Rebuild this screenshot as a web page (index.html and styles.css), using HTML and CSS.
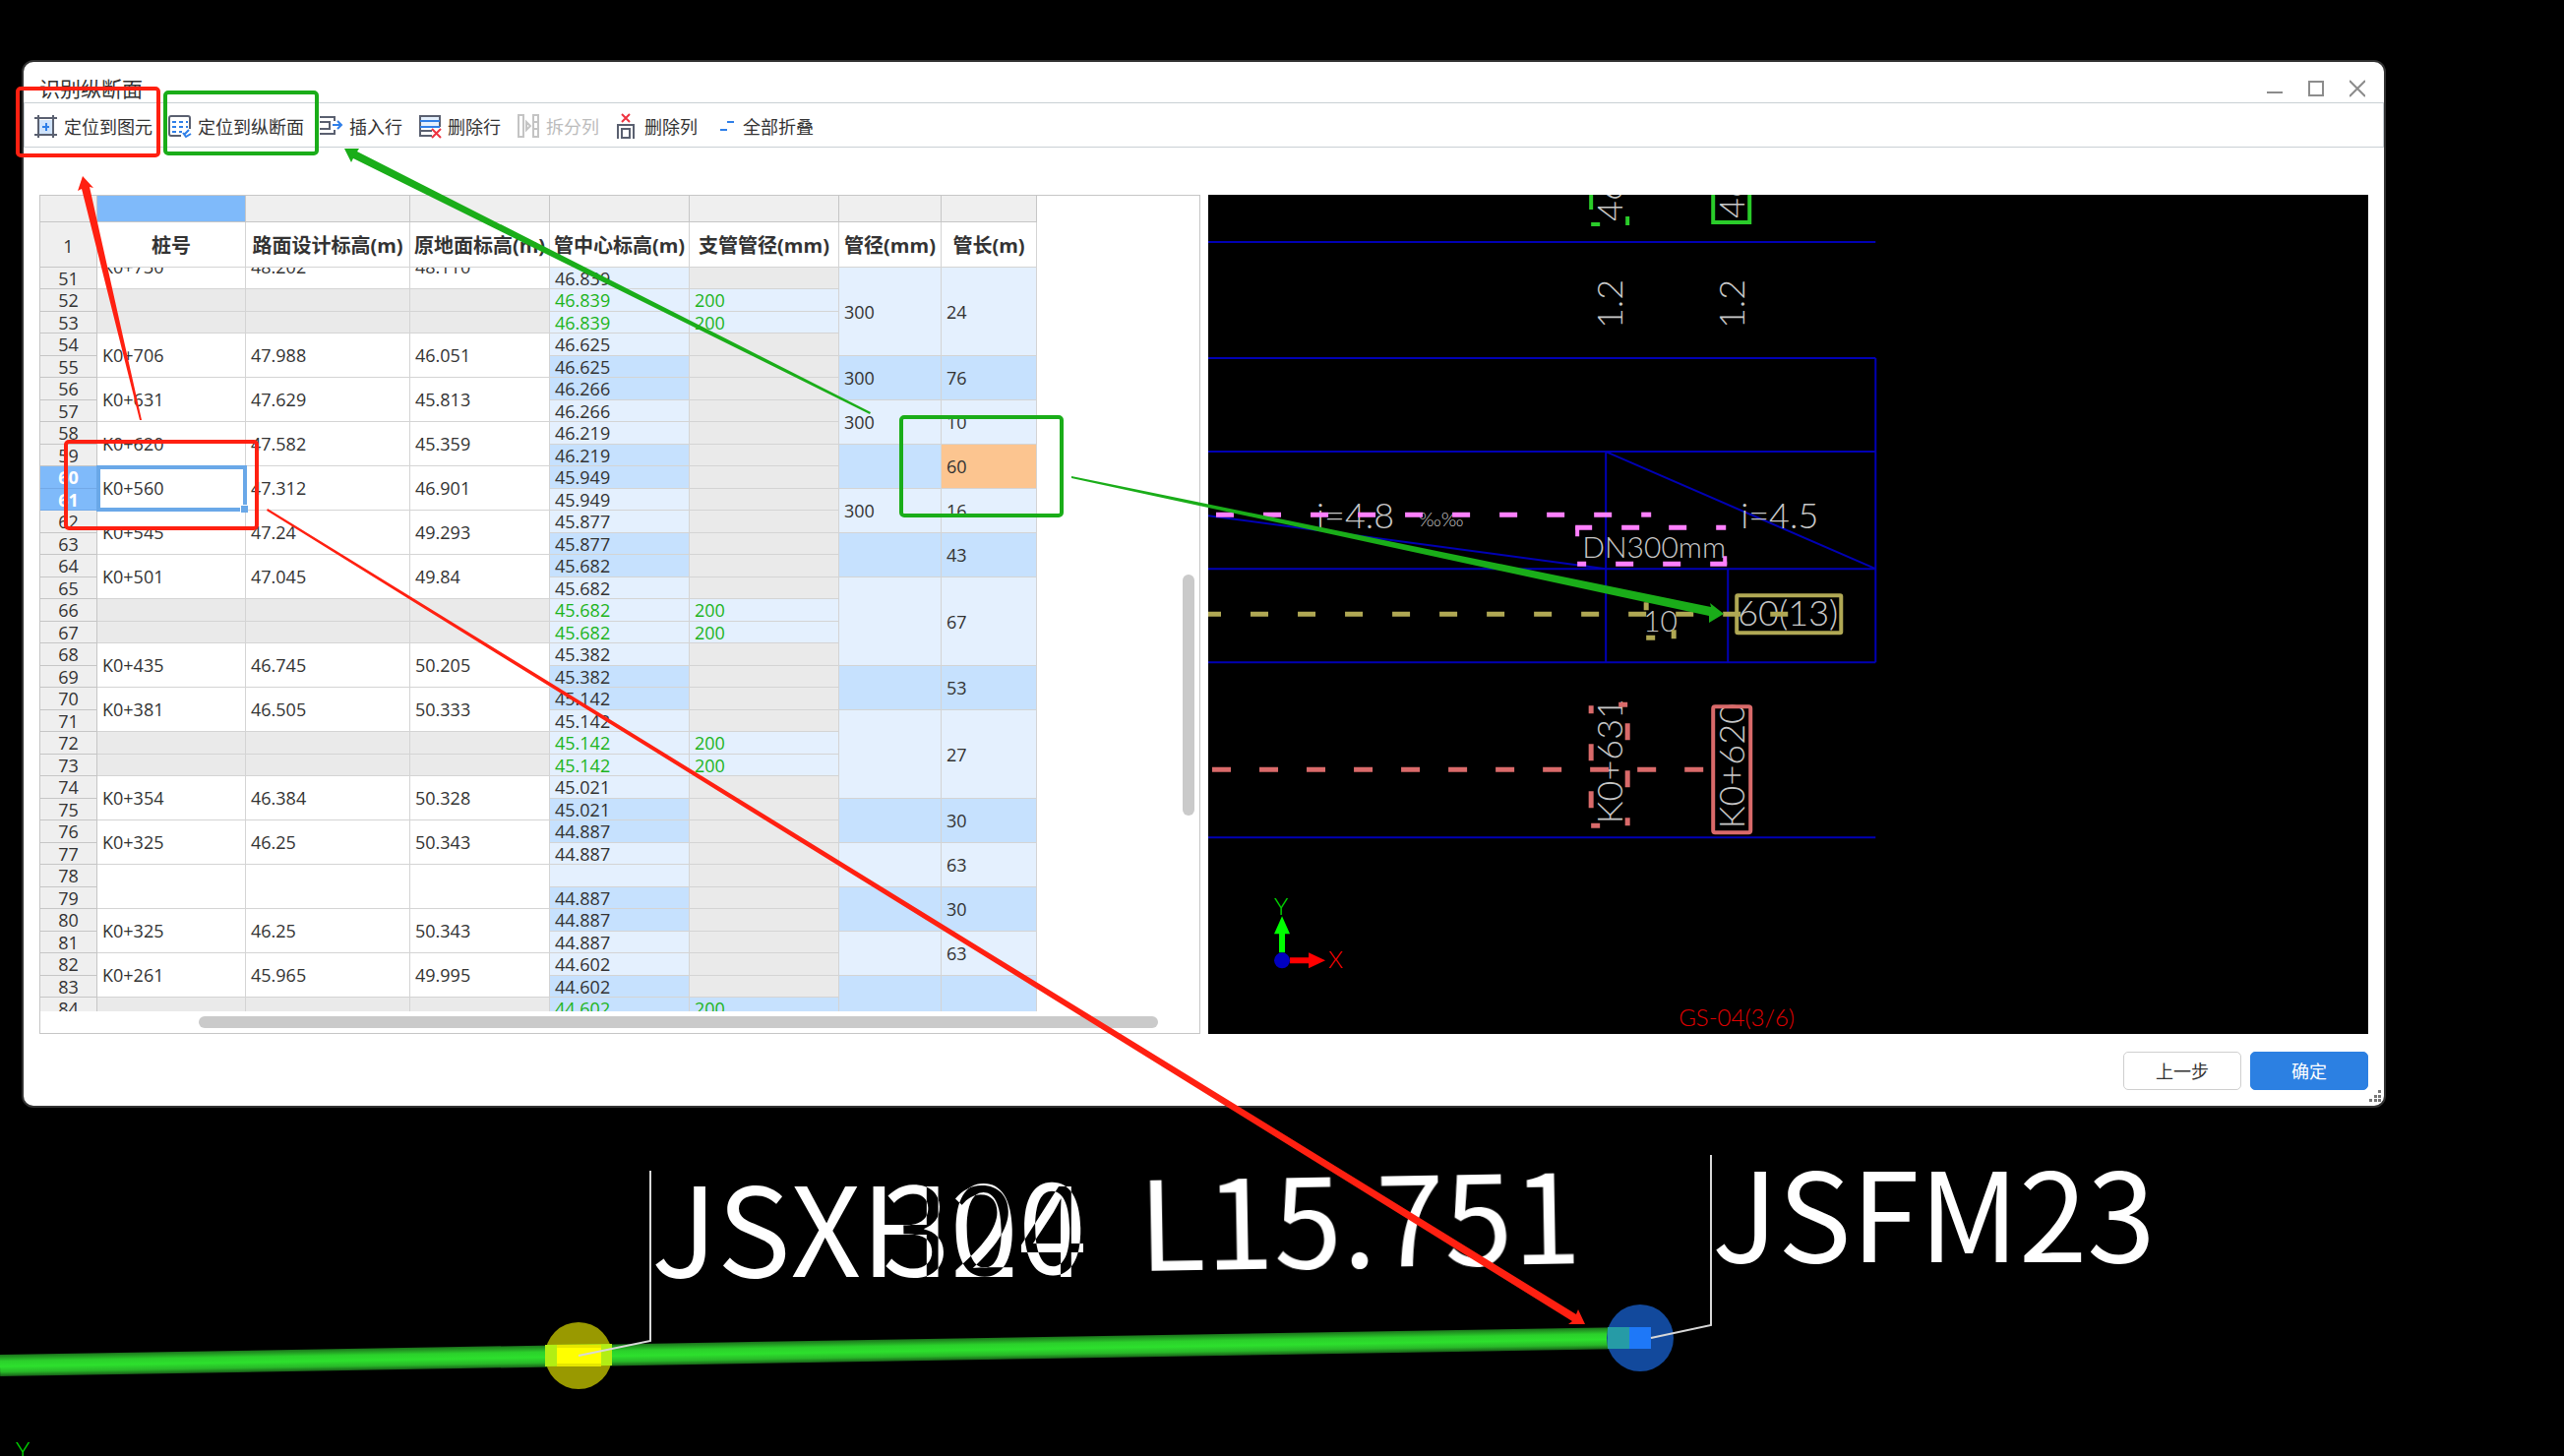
FILE: index.html
```html
<!DOCTYPE html>
<html lang="zh-CN">
<head>
<meta charset="utf-8">
<title>识别纵断面</title>
<link rel="stylesheet" href="styles.css">
</head>
<body>
<svg class="scene" width="2606" height="1480" aria-hidden="true">
  <defs>
    <linearGradient id="pipe" x1="0" y1="0" x2="0" y2="1">
      <stop offset="0" stop-color="#1c741c"/><stop offset="0.3" stop-color="#2bd02b"/>
      <stop offset="0.55" stop-color="#2de02d"/><stop offset="0.8" stop-color="#28b828"/>
      <stop offset="1" stop-color="#186018"/>
    </linearGradient>
  </defs>
  <rect x="0" y="1377" width="1657" height="22" fill="url(#pipe)" transform="rotate(-0.97 0 1388)"/>
  <circle cx="588" cy="1378" r="34" fill="#999900"/>
  <path d="M554 1367L622 1366V1388L554 1389Z" fill="#b2ee14"/>
  <rect x="566" y="1367" width="45" height="22" fill="#e6e600"/>
  <rect x="566" y="1370" width="45" height="16" fill="#ffff00"/>
  <circle cx="1667" cy="1360" r="34" fill="#12499c"/>
  <rect x="1634" y="1349" width="22" height="22" fill="#269ba6"/>
  <rect x="1656" y="1349" width="22" height="22" fill="#1e78f8"/>
  <g fill="none" stroke="#d8d8d8" stroke-width="2">
    <path d="M661 1190V1363L588 1378"/>
    <path d="M1739 1174V1347L1678 1360"/>
  </g>
  <g class="label">
    <text x="662" y="1298">JSXH24</text>
    <text class="label-cross" x="897" y="1298" transform="rotate(-1 897 1298)">300</text>
    <text x="1158" y="1292" transform="rotate(-1 1158 1292)">L15.751</text>
    <text x="1740" y="1283">JSFM23</text>
  </g>
  <text class="cad axis-y" x="16" y="1483">Y</text>
</svg>

<main class="dialog">
  <header class="titlebar">
    <h1>识别纵断面</h1>
    <div class="controls">
      <button aria-label="最小化"><svg width="16" height="18"><path d="M0 13H16"/></svg></button>
      <button aria-label="最大化"><svg width="16" height="18"><rect x="1" y="2" width="14" height="14"/></svg></button>
      <button aria-label="关闭"><svg width="16" height="18"><path d="M0 1L16 17M16 1L0 17"/></svg></button>
    </div>
  </header>
  <nav class="toolbar">
    <button><svg class="ico" viewBox="0 0 24 24"><rect x="5" y="5" width="13" height="14" fill="#cfe3fb" stroke="none"/><path d="M4 0V23M19 0V23M0 3H23M0 20H23"/><path class="b" d="M8 12H15M12 8V16"/></svg>定位到图元</button>
    <button><svg class="ico" viewBox="0 0 24 24"><path d="M22 14V3Q22 1 20 1H3Q1 1 1 3V19Q1 21 3 21H13"/><path class="b" stroke-dasharray="4 3" d="M4 7H20M4 12H20M4 17H14"/><path class="b" d="M16 20L21 15M15 18L18 22L23 19"/></svg>定位到纵断面</button>
    <button><svg class="ico" viewBox="0 0 24 24"><path d="M0 2H15V6M0 19H15V15M0 7H10V14H0"/><path class="b" d="M13 10H22M18 6L22 10L18 14"/></svg>插入行</button>
    <button><svg class="ico" viewBox="0 0 24 24"><rect x="2" y="1" width="20" height="11" fill="#e4f0fe" stroke="none"/><path d="M2 12V1H22V12M2 12V21H14M2 16H14"/><path class="b" d="M2 6H22M2 12H22"/><path class="r" d="M14 14L23 23M23 14L14 23"/></svg>删除行</button>
    <button disabled><svg class="ico" viewBox="0 0 24 24"><path d="M2 0H7V22H2ZM17 0H22V22H17ZM17 7H22M17 14H22M10 7L14 11L10 15Z"/></svg>拆分列</button>
    <button><svg class="ico" viewBox="0 0 24 24"><path d="M3 24V10H19V24M7 14H15V23H7Z"/><path class="r" d="M7 -1L15 7M15 -1L7 7"/></svg>删除列</button>
    <button><svg class="ico" viewBox="0 0 24 24"><path class="b" d="M14 7H21M7 15H14"/></svg>全部折叠</button>
  </nav>

  <section class="content">
    <div class="panel">
      <table class="grid">
        <colgroup><col class="w0"><col class="w1"><col class="w2"><col class="w3"><col class="w3"><col class="w4"><col class="w5"><col class="w6"></colgroup>
        <tr class="letters"><th></th><th class="on"></th><th></th><th></th><th></th><th></th><th></th><th></th></tr>
        <tr class="names"><th class="num">1</th><th>桩号</th><th>路面设计标高(m)</th><th>原地面标高(m)</th><th>管中心标高(m)</th><th>支管管径(mm)</th><th>管径(mm)</th><th>管长(m)</th></tr>
      </table>
      <div class="rows">
        <table class="grid data">
          <colgroup><col class="w0"><col class="w1"><col class="w2"><col class="w3"><col class="w3"><col class="w4"><col class="w5"><col class="w6"></colgroup>
          <tr><th></th><td rowspan="2">K0+730</td><td rowspan="2">48.202</td><td rowspan="2">48.110</td><td class="l"></td><td class="g"></td><td class="l"></td><td class="l"></td></tr>
          <tr><th>51</th><td class="l">46.839</td><td class="g"></td><td class="l" rowspan="4">300</td><td class="l" rowspan="4">24</td></tr>
          <tr><th>52</th><td class="g"></td><td class="g"></td><td class="g"></td><td class="l n">46.839</td><td class="l n">200</td></tr>
          <tr><th>53</th><td class="g"></td><td class="g"></td><td class="g"></td><td class="l n">46.839</td><td class="l n">200</td></tr>
          <tr><th>54</th><td rowspan="2">K0+706</td><td rowspan="2">47.988</td><td rowspan="2">46.051</td><td class="l">46.625</td><td class="g"></td></tr>
          <tr><th>55</th><td class="d">46.625</td><td class="g"></td><td class="d" rowspan="2">300</td><td class="d" rowspan="2">76</td></tr>
          <tr><th>56</th><td rowspan="2">K0+631</td><td rowspan="2">47.629</td><td rowspan="2">45.813</td><td class="d">46.266</td><td class="g"></td></tr>
          <tr><th>57</th><td class="l">46.266</td><td class="g"></td><td class="l" rowspan="2">300</td><td class="l" rowspan="2">10</td></tr>
          <tr><th>58</th><td rowspan="2">K0+620</td><td rowspan="2">47.582</td><td rowspan="2">45.359</td><td class="l">46.219</td><td class="g"></td></tr>
          <tr><th>59</th><td class="d">46.219</td><td class="g"></td><td class="d" rowspan="2"></td><td class="o" rowspan="2">60</td></tr>
          <tr><th class="on">60</th><td class="active" rowspan="2">K0+560</td><td rowspan="2">47.312</td><td rowspan="2">46.901</td><td class="d">45.949</td><td class="g"></td></tr>
          <tr><th class="on">61</th><td class="l">45.949</td><td class="g"></td><td class="l" rowspan="2">300</td><td class="l" rowspan="2">16</td></tr>
          <tr><th>62</th><td rowspan="2">K0+545</td><td rowspan="2">47.24</td><td rowspan="2">49.293</td><td class="l">45.877</td><td class="g"></td></tr>
          <tr><th>63</th><td class="d">45.877</td><td class="g"></td><td class="d" rowspan="2"></td><td class="d" rowspan="2">43</td></tr>
          <tr><th>64</th><td rowspan="2">K0+501</td><td rowspan="2">47.045</td><td rowspan="2">49.84</td><td class="d">45.682</td><td class="g"></td></tr>
          <tr><th>65</th><td class="l">45.682</td><td class="g"></td><td class="l" rowspan="4"></td><td class="l" rowspan="4">67</td></tr>
          <tr><th>66</th><td class="g"></td><td class="g"></td><td class="g"></td><td class="l n">45.682</td><td class="l n">200</td></tr>
          <tr><th>67</th><td class="g"></td><td class="g"></td><td class="g"></td><td class="l n">45.682</td><td class="l n">200</td></tr>
          <tr><th>68</th><td rowspan="2">K0+435</td><td rowspan="2">46.745</td><td rowspan="2">50.205</td><td class="l">45.382</td><td class="g"></td></tr>
          <tr><th>69</th><td class="d">45.382</td><td class="g"></td><td class="d" rowspan="2"></td><td class="d" rowspan="2">53</td></tr>
          <tr><th>70</th><td rowspan="2">K0+381</td><td rowspan="2">46.505</td><td rowspan="2">50.333</td><td class="d">45.142</td><td class="g"></td></tr>
          <tr><th>71</th><td class="l">45.142</td><td class="g"></td><td class="l" rowspan="4"></td><td class="l" rowspan="4">27</td></tr>
          <tr><th>72</th><td class="g"></td><td class="g"></td><td class="g"></td><td class="l n">45.142</td><td class="l n">200</td></tr>
          <tr><th>73</th><td class="g"></td><td class="g"></td><td class="g"></td><td class="l n">45.142</td><td class="l n">200</td></tr>
          <tr><th>74</th><td rowspan="2">K0+354</td><td rowspan="2">46.384</td><td rowspan="2">50.328</td><td class="l">45.021</td><td class="g"></td></tr>
          <tr><th>75</th><td class="d">45.021</td><td class="g"></td><td class="d" rowspan="2"></td><td class="d" rowspan="2">30</td></tr>
          <tr><th>76</th><td rowspan="2">K0+325</td><td rowspan="2">46.25</td><td rowspan="2">50.343</td><td class="d">44.887</td><td class="g"></td></tr>
          <tr><th>77</th><td class="l">44.887</td><td class="g"></td><td class="l" rowspan="2"></td><td class="l" rowspan="2">63</td></tr>
          <tr><th>78</th><td rowspan="2"></td><td rowspan="2"></td><td rowspan="2"></td><td class="l"></td><td class="g"></td></tr>
          <tr><th>79</th><td class="d">44.887</td><td class="g"></td><td class="d" rowspan="2"></td><td class="d" rowspan="2">30</td></tr>
          <tr><th>80</th><td rowspan="2">K0+325</td><td rowspan="2">46.25</td><td rowspan="2">50.343</td><td class="d">44.887</td><td class="g"></td></tr>
          <tr><th>81</th><td class="l">44.887</td><td class="g"></td><td class="l" rowspan="2"></td><td class="l" rowspan="2">63</td></tr>
          <tr><th>82</th><td rowspan="2">K0+261</td><td rowspan="2">45.965</td><td rowspan="2">49.995</td><td class="l">44.602</td><td class="g"></td></tr>
          <tr><th>83</th><td class="d">44.602</td><td class="g"></td><td class="d" rowspan="2"></td><td class="d" rowspan="2"></td></tr>
          <tr><th>84</th><td class="g"></td><td class="g"></td><td class="g"></td><td class="d n">44.602</td><td class="d n">200</td></tr>
        </table>
        <div class="vtrack"><div class="vthumb"></div></div>
      </div>
      <div class="htrack"><div class="hthumb"></div></div>
    </div>

    <svg class="view" viewBox="1228 198 1179 853" preserveAspectRatio="xMinYMin slice" role="img" aria-label="纵断面图">
      <g class="frame">
        <path d="M1228 246H1906M1228 364H1906M1228 459H1906M1228 578H1906M1228 673H1906M1228 851H1906"/>
        <path d="M1906 364V673M1632 459V673M1756 578V673M1632 459L1906 578M1228 524L1632 578"/>
      </g>
      <g class="cad">
        <text class="big" transform="translate(1649 225) rotate(-90)">46</text>
        <text class="big" transform="translate(1773 222) rotate(-90)">46</text>
        <text class="big" transform="translate(1649 334) rotate(-90)">1.2</text>
        <text class="big" transform="translate(1773 334) rotate(-90)">1.2</text>
        <text class="big" x="1338" y="537">i=4.8</text>
        <text class="small" x="1442" y="535">‰‰</text>
        <text class="mid" x="1608" y="567">DN300mm</text>
        <text class="big" x="1769" y="537">i=4.5</text>
        <text class="mid" x="1670" y="642">10</text>
        <text class="big" x="1766" y="636">60(13)</text>
        <text class="big" transform="translate(1649 837) rotate(-90)">K0+631</text>
        <text class="big" transform="translate(1773 842) rotate(-90)">K0+620</text>
        <text class="axis-y" x="1295" y="930">Y</text>
        <text class="axis-x" x="1350" y="984">X</text>
        <text class="note" x="1706" y="1043">GS-04(3/6)</text>
      </g>
      <g fill="none" stroke="#2acc2a" stroke-width="4">
        <path d="M1617 198V213M1617 228H1626M1654 220V229"/>
        <path d="M1741 198V226H1778V198"/>
      </g>
      <g fill="none" stroke="#ff80ff" stroke-width="5">
        <path d="M1236 523H1662" stroke-dasharray="18 30"/><path d="M1668 523H1678"/>
        <path d="M1601 536H1618M1648 536H1666M1696 536H1714M1744 536H1754M1603 573H1612M1642 573H1660M1690 573H1708M1738 573H1755"/>
        <path d="M1603 535V545M1753 565V574" stroke-width="4"/>
      </g>
      <g fill="none" stroke="#b0a854" stroke-width="5">
        <path d="M1228 624H1241M1271 624H1818" stroke-dasharray="18 30"/>
        <path d="M1673 612V620M1673 648H1682M1701 640V649"/>
        <rect x="1765" y="605" width="106" height="38" rx="1" stroke-width="4"/>
      </g>
      <g fill="none" stroke="#d96a6a" stroke-width="5">
        <path d="M1232 782H1731" stroke-dasharray="19 29"/>
        <path d="M1617 717V725M1617 756V773M1617 804V821M1654 735V752M1654 783V800M1654 831V839M1645 716H1654M1617 839H1626"/>
        <rect x="1741" y="718" width="38" height="128" rx="2" stroke-width="4"/>
      </g>
      <path fill="#00ff00" d="M1300 968V949H1295L1303 931L1311 949H1306V968Z"/>
      <path fill="#ff0000" d="M1311 973H1330V968L1347 976L1330 984V979H1311Z"/>
      <circle cx="1303" cy="976" r="8" fill="#0000c0"/>
    </svg>
  </section>

  <footer class="footer">
    <button class="btn">上一步</button>
    <button class="btn primary">确定</button>
    <svg class="grip" width="12" height="12" aria-hidden="true"><path d="M9 0h3v3h-3zM9 5h3v3h-3zM9 9h3v3h-3zM5 5h3v3h-3zM5 9h3v3h-3zM0 9h3v3h-3z"/></svg>
  </footer>
</main>

<svg class="notes" width="2606" height="1480" aria-hidden="true">
  <g fill="none" stroke-width="4">
    <rect class="nr" x="18" y="90" width="143" height="68" rx="3"/>
    <rect class="nr" x="67" y="449" width="194" height="88" rx="3"/>
    <rect class="ng" x="168" y="94" width="154" height="62" rx="3"/>
    <rect class="ng" x="916" y="424" width="163" height="100" rx="3"/>
  </g>
  <path fill="#ff2011" d="M84 179L95 191L91 190L144 427L142 427L83 192L79 194Z"/>
  <path fill="#ff2011" d="M1611 1346L1604 1331L1602 1336L272 517L271 519L1598 1343L1594 1346Z"/>
  <path fill="#1aad19" d="M350 151L365 151L363 154L885 419L884 421L359 161L357 165Z"/>
  <path fill="#1aad19" d="M1752 624L1738 613L1739 617L1089 484L1089 486L1737 626L1737 633Z"/>
</svg>
</body>
</html>
```
FILE: styles.css
```css
* { box-sizing: border-box; }

body {
  margin: 0;
  min-height: 100vh;
  position: relative;
  overflow: hidden;
  background: #000;
  color: #333;
  font: 18px/20px "Open Sans", "Noto Sans", "Noto Sans CJK SC", sans-serif;
}

button {
  font: inherit;
  color: inherit;
  background: none;
  border: 0;
  padding: 0;
}

.scene, .notes { position: absolute; left: 0; top: 0; }
.notes { pointer-events: none; }
.nr { stroke: #ff2011; }
.ng { stroke: #1aad19; }

.label { font: 400 125px "Noto Sans CJK SC", sans-serif; fill: #fff; isolation: isolate; }
.label-cross { mix-blend-mode: difference; }

.dialog {
  position: relative;
  margin: 61px 181px 0 22px;
  border: 2px solid #333;
  border-radius: 12px;
  background: #fff;
  overflow: hidden;
}

.titlebar {
  display: flex;
  align-items: center;
  justify-content: space-between;
  height: 41px;
  padding: 12px 19px 0 16px;
}
.titlebar h1 { margin: 0; font-size: 21px; line-height: 24px; font-weight: 400; }
.controls { display: flex; gap: 26px; }
.controls button { display: flex; }
.controls svg { fill: none; stroke: #8c8c8c; stroke-width: 2; }

.toolbar {
  display: flex;
  align-items: center;
  gap: 16px;
  height: 46px;
  padding: 3px 10px 0;
  border: 1px solid #c9d0d4;
}
.toolbar button { display: flex; align-items: center; gap: 6px; white-space: nowrap; }
.toolbar button:disabled { color: #bcbcbc; }
.ico { width: 24px; height: 24px; fill: none; stroke: #5a6070; stroke-width: 2; overflow: visible; }
.ico .b { stroke: #2f7fe8; }
.ico .r { stroke: #ee3340; }
button:disabled .ico { stroke: #c4c4c4; }

.content {
  display: grid;
  grid-template-columns: 1fr 1fr;
  gap: 8px;
  padding: 48px 16px 0;
}
.panel { border: 1px solid #c6c6c6; min-width: 0; }

.grid { table-layout: fixed; width: 1013px; border-spacing: 0; }
.w0 { width: 58px; }
.w1 { width: 151px; }
.w2 { width: 167px; }
.w3 { width: 142px; }
.w4 { width: 152px; }
.w5 { width: 104px; }
.w6 { width: 97px; }
.grid th, .grid td {
  padding: 0;
  border: solid #d4d4d4;
  border-width: 0 1px 1px 0;
  white-space: nowrap;
}
.letters th { height: 27px; background: #efefef; border-color: #c6c6c6; }
.letters th.on { background: #7fbafa; }
.grid .names th { height: 46px; padding-top: 3px; font-size: 20px; }
.grid .names .num, .data th { font-size: 18px; font-weight: 400; background: #efefef; border-color: #c6c6c6; }
.data th { height: 22px; }
.data tr:nth-child(odd) th { height: 23px; }
.data th.on { background: #7fbafa; color: #fff; font-weight: 700; border-color: #72a9e8; }
.grid.data td { padding-left: 5px; }
.data .l { background: #e4f0fe; }
.data .d { background: #c6e1fe; }
.data .g { background: #eaeaea; }
.data .o { background: #fcc590; }
.data .n { color: #1cb41c; }
.data .active { position: relative; outline: 4px solid #6aa8e8; outline-offset: -3px; }
.data .active::after {
  content: "";
  position: absolute;
  right: -3px;
  bottom: -3px;
  width: 7px;
  height: 7px;
  background: #6aa8e8;
  border: solid #fff;
  border-width: 1px 0 0 1px;
}

.rows { display: flex; justify-content: space-between; align-items: flex-start; height: 756px; overflow: hidden; }
.data { margin-top: -23px; }
.vtrack { padding: 312px 5px 0 0; }
.vthumb { width: 12px; height: 245px; border-radius: 6px; background: #cacaca; }
.htrack { padding: 5px 42px 5px 161px; }
.hthumb { height: 12px; border-radius: 6px; background: #cacaca; }

.view { display: block; width: 100%; height: 100%; background: #000; }
.frame { fill: none; stroke: #0000b4; stroke-width: 2; }
.cad { font-family: Lato, sans-serif; font-weight: 300; fill: #c8c8c8; }
.cad .big { font-size: 36px; }
.cad .mid { font-size: 30px; }
.cad .small { font-size: 20px; }
.cad .note { font-size: 24px; fill: #e00000; }
.cad .axis-x { font-size: 24px; fill: #ff0000; }
.axis-y { font-size: 24px; }
text.axis-y, .cad .axis-y { fill: #00e000; }

.footer { display: flex; justify-content: flex-end; gap: 9px; padding: 18px 16px 16px; }
.btn { width: 120px; height: 39px; border: 1px solid #cfcfcf; border-radius: 5px; }
.primary { border-color: #2c80e2; background: #2c80e2; color: #fff; }
.grip { position: absolute; right: 3px; bottom: 4px; fill: #777; }
```
